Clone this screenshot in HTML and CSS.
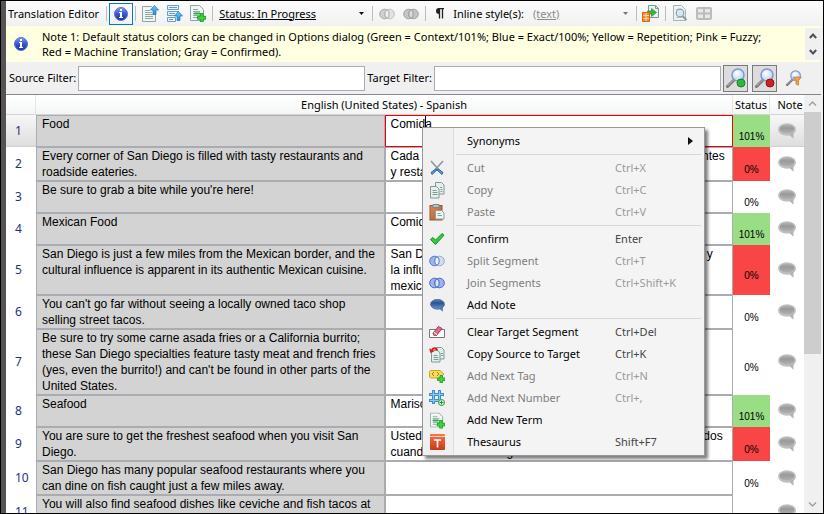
FILE: index.html
```html
<!DOCTYPE html>
<html lang="en">
<head>
<meta charset="utf-8">
<title>Translation Editor</title>
<link rel="stylesheet" href="styles.css">
</head>
<body>
<svg class="defs" aria-hidden="true">
  <defs>
    <linearGradient id="g-info" x1="0" y1="0" x2="0" y2="1"><stop offset="0" stop-color="#7d9cf2"/><stop offset=".5" stop-color="#3355d0"/><stop offset="1" stop-color="#1c35a8"/></linearGradient>
    <linearGradient id="g-up" x1="0" y1="0" x2="0" y2="1"><stop offset="0" stop-color="#7cc8f5"/><stop offset="1" stop-color="#2b86cf"/></linearGradient>
    <linearGradient id="g-note" x1="0" y1="0" x2="0" y2="1"><stop offset="0" stop-color="#b4b4b4"/><stop offset=".4" stop-color="#999"/><stop offset="1" stop-color="#b2b2b2"/></linearGradient>
    <linearGradient id="g-bnote" x1="0" y1="0" x2="0" y2="1"><stop offset="0" stop-color="#6488bd"/><stop offset=".35" stop-color="#2c528f"/><stop offset="1" stop-color="#6d94cc"/></linearGradient>
    <linearGradient id="g-th" x1="0" y1="0" x2="0" y2="1"><stop offset="0" stop-color="#f5764a"/><stop offset="1" stop-color="#c8391a"/></linearGradient>
    <linearGradient id="g-paste" x1="0" y1="0" x2="1" y2="1"><stop offset="0" stop-color="#d98c5e"/><stop offset="1" stop-color="#a85a2e"/></linearGradient>
    <radialGradient id="g-lens" cx=".4" cy=".35" r=".7"><stop offset="0" stop-color="#ffffff"/><stop offset="1" stop-color="#b5cdf5"/></radialGradient>
    <symbol id="info" viewBox="0 0 16 16"><circle cx="8" cy="8" r="6.500" fill="url(#g-info)" stroke="#5a74cc"/><path d="M7 3h2v2H7zM6 6h3v5h1v1H6v-1h1V7H6z" fill="#fff"/></symbol>
    <symbol id="doc-lines" viewBox="0 0 16 16"><path d="M.5 .5h9l4 4v11H.5z" fill="#f1f6f4" stroke="#8fa5a2"/><path d="M3 4.500h5M3 6.500h7M3 8.500h8M3 10.500h8M3 12.500h8" stroke="#8ba8a4" fill="none"/></symbol>
    <symbol id="plus" viewBox="0 0 8 8"><path d="M3 .5h2.500V3H8v2.500H5.500V8H3V5.500H.5V3H3z" fill="#3fd43f" stroke="#149a22" stroke-width=".8"/></symbol>
    <symbol id="note" viewBox="0 0 18 16"><ellipse cx="9" cy="6.500" rx="9" ry="6.200" fill="#c0c0c0"/><path d="M11 11.500l4.500 4.300V9z" fill="#b4b4b4"/><ellipse cx="9" cy="6" rx="7.300" ry="4.500" fill="url(#g-note)"/></symbol>
    <symbol id="lens" viewBox="0 0 20 20"><path d="M1.500 18.500l6-6" stroke="#777" stroke-width="3" stroke-linecap="round"/><path d="M1.500 18l6-6" stroke="#bbb" stroke-width="1"/><circle cx="12" cy="7" r="6" fill="url(#g-lens)" stroke="#7b98dc" stroke-width="1.500"/></symbol>
    <symbol id="arrow-up" viewBox="0 0 9 10"><path d="M4.500.5l4 4.500H6v4.500H3V5H.5z" fill="url(#g-up)" stroke="#2c83c6" stroke-width=".8"/></symbol>
  </defs>
</svg>
<main class="app">
  <header class="toolbar">
    <h1 class="title">Translation Editor</h1>
    <span class="sep"></span>
    <button class="tool on" aria-label="Show notes"><svg width="16" height="16"><use href="#info"/></svg></button>
    <span class="sep"></span>
    <button class="tool" aria-label="Previous segment"><svg width="17" height="17" viewBox="0 0 17 17"><use href="#doc-lines" width="16" height="16" y="1"/><use href="#arrow-up" x="8" y="0" width="9" height="10"/></svg></button>
    <button class="tool" aria-label="Next segment"><svg width="17" height="17" viewBox="0 0 17 17"><path d="M1.500.5h11v4h-11zM1.500 6.500h11v4h-11zM1.500 12.500h8v4h-8z" fill="#e8f3fb" stroke="#6f9cc4"/><path d="M3 2.500h8M3 8.500h6M3 14.500h4" stroke="#6f9cc4"/><use href="#arrow-up" x="8" y="6" width="9" height="10"/></svg></button>
    <button class="tool" aria-label="Add term"><svg width="17" height="17" viewBox="0 0 17 17"><use href="#doc-lines" width="16" height="16"/><path d="M4 8.500h6" stroke="#2fa83b" stroke-width="2"/><use href="#plus" x="7" y="8" width="9" height="9"/></svg></button>
    <span class="sep"></span>
    <select class="drop status" aria-label="Status"><option>Status: In Progress</option></select>
    <span class="sep"></span>
    <button class="tool" aria-label="Split"><svg width="16" height="12" viewBox="0 0 16 12"><circle cx="5.500" cy="6" r="4.800" fill="#cfcfcf" stroke="#a9a9a9"/><circle cx="10.500" cy="6" r="4.800" fill="#e2e2e2" stroke="#bdbdbd"/><ellipse cx="8" cy="6" rx="2.200" ry="4" fill="#eee" stroke="#aaa"/></svg></button>
    <button class="tool" aria-label="Join"><svg width="16" height="12" viewBox="0 0 16 12"><circle cx="5.500" cy="6" r="4.800" fill="#c4c4c4" stroke="#a2a2a2"/><circle cx="10.500" cy="6" r="4.800" fill="#c4c4c4" stroke="#a2a2a2"/><ellipse cx="8" cy="6" rx="2.200" ry="4" fill="#ddd" stroke="#999"/></svg></button>
    <span class="sep"></span>
    <button class="tool" aria-label="Show marks"><svg width="10" height="11" viewBox="0 0 10 11"><path d="M9 .5H4M4.500.5v10M7.500.5v10" stroke="#222" stroke-width="1.300" fill="none"/><path d="M4.500 0H4a3 3 0 0 0 0 6h.5z" fill="#222"/></svg></button>
    <label class="inline-label" for="style">Inline style(s):</label>
    <select class="drop style" id="style" disabled><option>(text)</option></select>
    <span class="sep"></span>
    <button class="tool" aria-label="Convert"><svg width="17" height="17" viewBox="0 0 17 17"><path d="M6.500.5h7l3 3v9h-10z" fill="#e9f1ef" stroke="#7d9794"/><path d="M13.500.5v3h3" fill="none" stroke="#7d9794"/><path d="M5.500 6h4V3.500l5 4-5 4V9h-4z" fill="#35b83c" stroke="#16822a" stroke-width=".6"/><path d="M.5 7.500h7v9h-7z" fill="#f58a2c" stroke="#d66a12"/><path d="M1 10.500h6M1 13.500h6M4 8v8" stroke="#ffd3a3"/></svg></button>
    <span class="sep"></span>
    <button class="tool" aria-label="Preview"><svg width="16" height="17" viewBox="0 0 16 17"><path d="M1.500.5h8l4 4v11h-12z" fill="#edf3f2" stroke="#a4b5b3"/><path d="M4 4.500h5M4 12.500h6" stroke="#b9c8c6"/><path d="M10.500 11l4 4" stroke="#8b9ba0" stroke-width="2"/><circle cx="8" cy="8" r="3.800" fill="#d8e8f0" stroke="#86a0ac" stroke-width="1.200"/></svg></button>
    <button class="tool" aria-label="Table view"><svg width="16" height="13" viewBox="0 0 16 13"><rect x="1" y="1" width="14" height="11" rx="1" fill="#e8e8e8" stroke="#bcbcbc" stroke-width="2"/><path d="M8 1v11M1 6.500h14" stroke="#bcbcbc" stroke-width="2"/></svg></button>
  </header>

  <section class="notice">
    <svg class="notice-icon" width="16" height="16"><use href="#info"/></svg>
    <p class="notice-text">Note 1: Default status colors can be changed in Options dialog (Green = Context/101%; Blue = Exact/100%; Yellow = Repetition; Pink = Fuzzy;<br>Red = Machine Translation; Gray = Confirmed).</p>
    <div class="spinner">
      <button aria-label="Previous note"><svg width="8" height="6" viewBox="0 0 8 6"><path d="M.8 5L4 1.500 7.200 5" fill="none" stroke="#505050" stroke-width="2"/></svg></button>
      <button aria-label="Next note"><svg width="8" height="6" viewBox="0 0 8 6"><path d="M.8 1L4 4.500 7.200 1" fill="none" stroke="#505050" stroke-width="2"/></svg></button>
    </div>
  </section>

  <form class="filters">
    <label for="src">Source Filter:</label>
    <input id="src" type="text">
    <label for="tgt">Target Filter:</label>
    <input id="tgt" type="text">
    <button type="button" class="filter-btn" aria-label="Include"><svg width="20" height="20"><use href="#lens"/><circle cx="15" cy="15" r="4" fill="#2db83a" stroke="#128a22"/></svg></button>
    <button type="button" class="filter-btn" aria-label="Exclude"><svg width="20" height="20"><use href="#lens"/><circle cx="15" cy="15" r="4" fill="#d02020" stroke="#961010"/></svg></button>
    <button type="button" class="filter-btn flat" aria-label="Filter options"><svg width="16" height="16" viewBox="0 0 20 20"><use href="#lens" width="20" height="20"/><path d="M9 9h10l-3.500 4v6l-3-1.500V13z" fill="#f5a04a" stroke="#cf7418"/></svg></button>
  </form>

  <section class="grid">
    <div class="grid-body">
      <table class="segments">
        <colgroup><col class="c-num"><col><col><col class="c-status"><col class="c-note"></colgroup>
        <thead><tr><th></th><th colspan="2">English (United States) - Spanish</th><th>Status</th><th class="note-head">Note</th></tr></thead>
        <tbody>
          <tr class="current"><td class="num">1</td><td class="src">Food</td><td class="tgt">Comid<span class="caret"></span>a</td><td class="st green">101%</td><td class="note"><svg width="18" height="16"><use href="#note"/></svg></td></tr>
          <tr><td class="num">2</td><td class="src">Every corner of San Diego is filled with tasty restaurants and roadside eateries.</td><td class="tgt">Cada rincón de San Diego está lleno de sabrosos restaurantes<br>y restaurantes de carretera.</td><td class="st red">0%</td><td class="note"><svg width="18" height="16"><use href="#note"/></svg></td></tr>
          <tr><td class="num">3</td><td class="src">Be sure to grab a bite while you're here!</td><td class="tgt"></td><td class="st">0%</td><td class="note"><svg width="18" height="16"><use href="#note"/></svg></td></tr>
          <tr><td class="num">4</td><td class="src">Mexican Food</td><td class="tgt">Comida mexicana</td><td class="st green">101%</td><td class="note"><svg width="18" height="16"><use href="#note"/></svg></td></tr>
          <tr><td class="num">5</td><td class="src">San Diego is just a few miles from the Mexican border, and the cultural influence is apparent in its authentic Mexican cuisine.</td><td class="tgt">San Diego está a solo unas millas de la frontera mexicana, y<br>la influencia cultural es evidente en su auténtica cocina<br>mexicana.</td><td class="st red">0%</td><td class="note"><svg width="18" height="16"><use href="#note"/></svg></td></tr>
          <tr><td class="num">6</td><td class="src">You can't go far without seeing a locally owned taco shop selling street tacos.</td><td class="tgt"></td><td class="st">0%</td><td class="note"><svg width="18" height="16"><use href="#note"/></svg></td></tr>
          <tr><td class="num">7</td><td class="src">Be sure to try some carne asada fries or a California burrito; these San Diego specialties feature tasty meat and french fries (yes, even the burrito!) and can't be found in other parts of the United States.</td><td class="tgt"></td><td class="st">0%</td><td class="note"><svg width="18" height="16"><use href="#note"/></svg></td></tr>
          <tr><td class="num">8</td><td class="src">Seafood</td><td class="tgt">Mariscos</td><td class="st green">101%</td><td class="note"><svg width="18" height="16"><use href="#note"/></svg></td></tr>
          <tr><td class="num">9</td><td class="src">You are sure to get the freshest seafood when you visit San Diego.</td><td class="tgt">Usted está seguro de obtener los mariscos más frescos, todos<br>cuando visite San Diego.</td><td class="st red">0%</td><td class="note"><svg width="18" height="16"><use href="#note"/></svg></td></tr>
          <tr><td class="num">10</td><td class="src">San Diego has many popular seafood restaurants where you can dine on fish caught just a few miles away.</td><td class="tgt"></td><td class="st">0%</td><td class="note"><svg width="18" height="16"><use href="#note"/></svg></td></tr>
          <tr><td class="num">11</td><td class="src">You will also find seafood dishes like ceviche and fish tacos at many local restaurants.</td><td class="tgt"></td><td class="st"></td><td class="note"><svg width="18" height="16"><use href="#note"/></svg></td></tr>
        </tbody>
      </table>
    </div>
    <div class="scrollbar">
      <svg width="17" height="17" viewBox="0 0 17 17"><path d="M5 10.500L8.500 7l3.500 3.500" fill="none" stroke="#a0a0a0" stroke-width="1.500"/></svg>
      <div class="track"><div class="thumb"></div></div>
      <svg width="17" height="17" viewBox="0 0 17 17"><path d="M5 6.500L8.500 10 12 6.500" fill="none" stroke="#a0a0a0" stroke-width="1.500"/></svg>
    </div>
  </section>

  <div class="menu" role="menu">
    <button class="item"><span class="ic"></span><span>Synonyms</span><svg class="sub" width="5" height="8" viewBox="0 0 5 8"><path d="M0 0l5 4-5 4z" fill="#111"/></svg></button>
    <hr>
    <button class="item" disabled><span class="ic"><svg width="16" height="16" viewBox="0 0 16 16"><path d="M2 1l8.500 9.500M14 1L5.500 10.500" stroke="#8d979f" stroke-width="1.600"/><path d="M6.500 9L2 12.500l1 2L8 10zM9.500 9l4.500 3.500-1 2L8 10z" fill="#5b95d6" stroke="#2f6bb0"/></svg></span><span>Cut</span><kbd>Ctrl+X</kbd></button>
    <button class="item" disabled><span class="ic"><svg width="16" height="17" viewBox="0 0 16 17"><path d="M6.500.5h6l2.500 2.500v9H6.500z" fill="#e6efec" stroke="#7f9a98"/><path d="M1.500 4.500h6L10 7v9H1.500z" fill="#e6efec" stroke="#7f9a98"/><path d="M3.500 8.500h4M3.500 10.500h5M3.500 12.500h5M11 5.500h2M11.500 7.500h2M11.500 9.500h2" stroke="#7f9a98"/></svg></span><span>Copy</span><kbd>Ctrl+C</kbd></button>
    <button class="item" disabled><span class="ic"><svg width="16" height="17" viewBox="0 0 16 17"><rect x="1" y="1.500" width="12" height="14.500" fill="url(#g-paste)" stroke="#9a5630"/><path d="M4 .5h6v3H4z" fill="#b9c3c6" stroke="#7d878a"/><path d="M6.500 6.500h6l2.500 2.500v6H6.500z" fill="#eef4f2" stroke="#8aa3a0"/><path d="M8.500 9.500h3M8.500 11.500h4.500" stroke="#8aa3a0"/></svg></span><span>Paste</span><kbd>Ctrl+V</kbd></button>
    <hr>
    <button class="item"><span class="ic"><svg width="16" height="14" viewBox="0 0 16 14"><path d="M1.500 7.500L4 5.500l2.500 2.700L13 1.500l2 1.700-8.500 9.300z" fill="#2fd03a" stroke="#148c22"/></svg></span><span>Confirm</span><kbd>Enter</kbd></button>
    <button class="item" disabled><span class="ic"><svg width="16" height="12" viewBox="0 0 16 12"><circle cx="5.500" cy="6" r="4.800" fill="#9db5ee" stroke="#5576d0"/><circle cx="10.500" cy="6" r="4.800" fill="#cfdff0" stroke="#90afd0"/><ellipse cx="8" cy="6" rx="2.200" ry="4" fill="#f0f5ff" stroke="#5576d0"/></svg></span><span>Split Segment</span><kbd>Ctrl+T</kbd></button>
    <button class="item" disabled><span class="ic"><svg width="16" height="12" viewBox="0 0 16 12"><circle cx="5.500" cy="6" r="4.800" fill="#9db5ee" stroke="#4467cb"/><circle cx="10.500" cy="6" r="4.800" fill="#9db5ee" stroke="#4467cb"/><ellipse cx="8" cy="6" rx="2.200" ry="4" fill="#dce6ff" stroke="#4467cb"/></svg></span><span>Join Segments</span><kbd>Ctrl+Shift+K</kbd></button>
    <button class="item"><span class="ic"><svg width="15" height="13" viewBox="0 0 18 16"><path d="M11 11.500l4.500 4.300V9z" fill="#4b75b3"/><ellipse cx="9" cy="6.500" rx="8.500" ry="6" fill="url(#g-bnote)" stroke="#3d639c"/></svg></span><span>Add Note</span></button>
    <hr>
    <button class="item"><span class="ic"><svg width="16" height="14" viewBox="0 0 16 14"><path d="M.5 4.500h15v8H.5z" fill="#fff" stroke="#777"/><path d="M4 8L9.500 1.500l3.500 2-5.500 7H5z" fill="#e26a80" stroke="#a23a50"/><path d="M4 8l3.500 2.500H5z M5.500 6.500L9 9l-1.500 1.500L4 8z" fill="#f7dce1" stroke="#a23a50" stroke-width=".6"/></svg></span><span>Clear Target Segment</span><kbd>Ctrl+Del</kbd></button>
    <button class="item"><span class="ic"><svg width="16" height="17" viewBox="0 0 16 17"><path d="M7.500 1.500h5L15 4v9H7.500z" fill="#e6efec" stroke="#7f9a98"/><path d="M2.500 4.500H9L11 7v9H2.500z" fill="#e6efec" stroke="#7f9a98"/><path d="M4.500 9.500h4M4.500 11.500h5M4.500 13.500h5M12 7.500h2M12 9.500h2" stroke="#7f9a98"/><path d="M8 4.500C7.500 1.500 4.500 1.500 3 4" fill="none" stroke="#e01818" stroke-width="2"/><path d="M.3 2l1 5 4-1.500z" fill="#e01818"/></svg></span><span>Copy Source to Target</span><kbd>Ctrl+K</kbd></button>
    <button class="item" disabled><span class="ic"><svg width="16" height="14" viewBox="0 0 16 14"><path d="M1.500 1.500h9.500l4 3.500-4 4H1.500L.5 8V2.500z" fill="#f2dc62" stroke="#c9a520"/><path d="M5 3L3 5l2 2M8 3l2 2-2 2" fill="none" stroke="#a5850f"/><use href="#plus" x="8" y="6" width="8" height="8"/></svg></span><span>Add Next Tag</span><kbd>Ctrl+N</kbd></button>
    <button class="item" disabled><span class="ic"><svg width="16" height="16" viewBox="0 0 16 16"><path d="M4.500 0v14M10.500 0v12M0 4.500h15M0 10.500h12" stroke="#3c8fd0" stroke-width="3"/><path d="M4.500 1v12M10.500 1v11M1 4.500h13M1 10.500h10" stroke="#8ccaf5"/><circle cx="12.500" cy="12.500" r="3" fill="#eaffea" stroke="#1f9a2b"/><path d="M12.500 10.500v4M10.500 12.500h4" stroke="#1f9a2b"/></svg></span><span>Add Next Number</span><kbd>Ctrl+,</kbd></button>
    <button class="item"><span class="ic"><svg width="16" height="17" viewBox="0 0 17 17"><use href="#doc-lines" x="1" width="16" height="16"/><path d="M4 8.500h6" stroke="#2fa83b" stroke-width="2"/><use href="#plus" x="8" y="8" width="9" height="9"/></svg></span><span>Add New Term</span></button>
    <button class="item"><span class="ic"><svg width="15" height="16" viewBox="0 0 15 16"><rect width="15" height="16" rx="1" fill="url(#g-th)"/><path d="M0 2.500h15" stroke="#fbd0bd"/><path d="M4 6h7M7.500 6v7.500" stroke="#fff" stroke-width="1.600"/></svg></span><span>Thesaurus</span><kbd>Shift+F7</kbd></button>
  </div>
</main>
</body>
</html>
```
FILE: styles.css
```css
* { box-sizing: border-box; }

body {
  margin: 0;
  background: #000;
  color: #000;
  font: 11px/16px "Noto Sans", "Open Sans", sans-serif;
}

button, input, select { font: inherit; color: inherit; }
button { padding: 0; border: 0; background: none; }
svg { display: block; flex: none; }
.defs { position: absolute; width: 0; height: 0; }

.app {
  position: relative;
  display: flex;
  flex-direction: column;
  height: 100vh;
  overflow: hidden;
  border: 1px solid #000;
  border-left: 0;
  background: #f0f0f0;
}
.app::before {
  content: "";
  position: absolute;
  inset: 0 auto 0 0;
  width: 5px;
  border-left: 1px solid #000;
  background: #555354;
}

/* Toolbar */
.toolbar {
  display: flex;
  align-items: center;
  height: 25px;
  margin-left: 5px;
  padding-left: 3px;
  background: linear-gradient(#fcfcfc, #f1f1f1);
}
.title { margin: 0 5px 0 0; font: inherit; white-space: nowrap; }
.sep { width: 1px; height: 15px; margin: 0 2px; background: #bdbdbd; }
.tool { display: grid; place-items: center; width: 24px; height: 22px; flex: none; }
.tool.on { border: 1px solid #0078d7; }
.drop {
  appearance: none;
  padding: 0 4px;
  border: 0;
  outline: 0;
  background: url("data:image/svg+xml,%3Csvg xmlns='http://www.w3.org/2000/svg' width='5' height='3'%3E%3Cpath d='M0 0h5L2.500 3z' fill='%23111'/%3E%3C/svg%3E") no-repeat right 6px center;
  text-decoration: underline;
}
.status { width: 155px; }
.style {
  width: 105px;
  background-image: url("data:image/svg+xml,%3Csvg xmlns='http://www.w3.org/2000/svg' width='5' height='3'%3E%3Cpath d='M0 0h5L2.500 3z' fill='%23777'/%3E%3C/svg%3E");
  color: #8b8b8b;
  opacity: 1;
}
.inline-label { margin: 0 5px 0 1px; white-space: nowrap; }

/* Notice */
.notice {
  display: flex;
  align-items: center;
  height: 36px;
  margin: 0 2px 0 5px;
  padding-left: 8px;
  background: #ffffe1;
}
.notice-icon { margin-right: 13px; }
.notice-text { flex: 1; margin: 0; line-height: 15px; white-space: nowrap; }
.spinner { display: grid; width: 16px; height: 32px; background: #f0f0f0; }
.spinner button { display: grid; place-items: center; }

/* Filters */
.filters {
  display: flex;
  align-items: center;
  height: 32px;
  margin-left: 5px;
  padding: 0 17px 0 4px;
  white-space: nowrap;
}
.filters input {
  flex: 1;
  min-width: 0;
  height: 25px;
  margin: 0 2px;
  border: 1px solid #abadb3;
  background: #fff;
}
.filter-btn {
  display: grid;
  place-items: center;
  width: 25px;
  height: 27px;
  margin-right: 4px;
  border: 1px solid #7a7a7a;
  background: #dcdcdc;
}
.filter-btn.flat { margin: 0; border: 0; background: none; }

/* Segment grid */
.grid {
  display: flex;
  flex: 1;
  min-height: 0;
  margin: 0 2px 0 5px;
  border-top: 1px solid #828790;
  border-left: 1px solid #828790;
  background: #fff;
}
.grid-body { flex: 1; min-width: 0; overflow: hidden; }
.segments {
  width: 100%;
  table-layout: fixed;
  border-collapse: separate;
  border-spacing: 0;
}
.c-num { width: 30px; }
.c-status { width: 37px; }
.c-note { width: 34px; }
th {
  height: 20px;
  padding: 0;
  border-right: 1px solid #e3e5e6;
  border-bottom: 1px solid #d5d5d5;
  background: linear-gradient(#fff, #f4f6f6);
  font-weight: normal;
}
.note-head { padding-left: 6px; border-right: 0; }
td { height: 32px; padding: 0; }
.src, .tgt {
  padding: 0 6px 0 5px;
  border: 1px solid #ababb2;
  font: 12px/16px "Liberation Sans", sans-serif;
  vertical-align: top;
}
.src { background: #d3d3d3; }
.num { padding-left: 9px; color: #1e3280; font-size: 12px; }
.st {
  padding-top: 12px;
  font: 10px/16px "Liberation Sans", sans-serif;
  text-align: center;
}
.green { background: #99dd85; }
.red { background: #f94545; }
.note svg { margin-left: 8px; }
.current .num, .current .note {
  border-bottom: 1px solid #d0d0d0;
  background: linear-gradient(#f7f7f7, #dedede);
}
.current .tgt { border-color: #f00000; }
.caret {
  display: inline-block;
  width: 1px;
  height: 14px;
  margin-right: -1px;
  background: #000;
  vertical-align: top;
}

/* Scrollbar */
.scrollbar { display: flex; flex-direction: column; width: 17px; background: #f0f0f0; }
.track { flex: 1; }
.thumb { height: 63%; background: #cdcdcd; }

/* Context menu */
.menu {
  position: absolute;
  top: 126px;
  left: 422px;
  display: flex;
  flex-direction: column;
  width: 283px;
  padding: 2px;
  border: 1px solid #979797;
  background: linear-gradient(90deg, #f0f0f0 30px, #dcdcdc 30px 31px, #f4f4f4 31px);
  box-shadow: 3px 3px 3px rgba(0, 0, 0, .5);
}
.item {
  display: grid;
  grid-template-columns: 24px 166px 1fr auto;
  align-items: center;
  height: 22px;
  text-align: left;
  white-space: nowrap;
}
.item span:nth-child(2) { padding-left: 18px; }
.item:disabled { color: #7d7d7d; }
.ic { display: grid; place-items: center; }
.sub { grid-column: 4; margin-right: 9px; }
kbd { font: inherit; color: #444; }
.item:disabled kbd { color: #9a9a9a; }
.menu hr {
  width: 245px;
  height: 1px;
  margin: 2px 1px 2px auto;
  border: 0;
  background: #d7d7d7;
}
```
